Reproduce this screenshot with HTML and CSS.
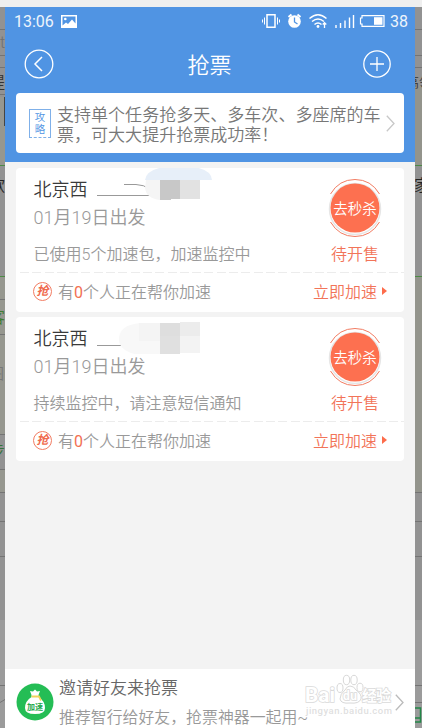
FILE: index.html
```
<!DOCTYPE html>
<html lang="zh-CN">
<head>
  <meta charset="UTF-8">
  <meta name="viewport" content="width=device-width, initial-scale=1.0">
  <title>抢票</title>
  <link rel="stylesheet" href="styles.css">
</head>
<body>

<div class="topbar"></div>

<div class="stage">
  <svg class="edge" width="5" height="721" viewBox="0 7 5 721">
    <path fill="#96978f" d="M0 97h5v68H0zM0 276h5v158H0zM0 469h5v23H0z"/>
    <path fill="#9b9b9b" d="M0 620h5v108H0z"/>
    <path stroke="#747474" d="M0 29.500h5M0 55.500h5M0 67.500h5M0 94.500h5M0 299.500h5M0 334.500h5M0 434.500h5M0 469.500h5M0 492.500h5M0 521.500h5M0 556.500h5M0 685.500h5M0 702.500l5-3"/>
    <path stroke="#4c8a45" d="M0 165.500h5M0 276.500h5"/>
    <path stroke="#444" d="M4.500 97v29"/>
    <text x="0" y="48" fill="#6f6f6f" font-size="16">t</text>
    <text x="-11" y="88" fill="#333" font-size="16">提</text>
    <text x="-11" y="191" fill="#222" font-size="16">款</text>
    <text x="-11" y="323" fill="#3f7d32" font-size="16">客</text>
    <text x="-11" y="379" fill="#777" font-size="15">图</text>
    <text x="-11" y="457" fill="#34733a" font-size="16">步</text>
  </svg>

  <main class="phone">
    <header class="header">
      <div class="status">
        <span class="time">13:06</span>
        <svg class="photo" width="16" height="13" viewBox="0 0 16 13">
          <path fill="#fff" fill-rule="evenodd" d="M0 0h16v13H0zM1.500 1.500v9l3.500-3 2 1.500 4-4.500 3.500 4v-7z"/>
          <circle cx="4.300" cy="4" r="1.300" fill="#fff"/>
        </svg>
        <svg class="signals" width="124" height="16" viewBox="0 0 124 16" fill="none" stroke="#fff">
          <path stroke-width="1.500" d="M5 1.700h8v12.600H5z"/>
          <path d="M2.500 4.500v7M.5 6.500v3M15.500 4.500v7M17.500 6.500v3"/>
          <circle cx="32.500" cy="8.500" r="6.300" fill="#fff" stroke="none"/>
          <path stroke-width="2" d="M26.500 4l3-2.500M38.500 4l-3-2.500"/>
          <path stroke="#5094e3" stroke-width="1.300" d="M32.500 4.500v4.500l3 2"/>
          <path stroke-width="1.500" d="M47.500 5.500q8.500-7.500 17 0M50 8.500q6-5 12 0M52.500 11.500q3.500-3 7 0"/>
          <circle cx="56" cy="13.500" r="1.400" fill="#fff" stroke="none"/>
          <path stroke-width="1.300" d="M62.500 15v-5M60.700 11.500l1.800-1.800 1.800 1.800"/>
          <path stroke-width="1.400" d="M74 15v-3M78.500 15v-5M83 15V7.500M87.500 15V4.500M91.500 15V2"/>
          <path stroke-width="1.200" d="M100 2.600h22v10.800h-22V11h-1.500V5h1.500z"/>
          <path fill="#fff" stroke="none" d="M112 4.200h8.500v7.600H112z"/>
        </svg>
        <span class="battery">38</span>
      </div>
      <div class="nav">
        <svg width="30" height="30" viewBox="0 0 30 30" fill="none" stroke="#fff" stroke-width="1.300">
          <circle cx="15" cy="15" r="13.800"/>
          <path stroke-width="1.500" d="M18 8l-7 7 7 7"/>
        </svg>
        <h1>抢票</h1>
        <svg width="30" height="30" viewBox="0 0 30 30" fill="none" stroke="#fff" stroke-width="1.300">
          <circle cx="15" cy="15" r="13.200"/>
          <path d="M15 8v14M8 15h14"/>
        </svg>
      </div>
      <div class="guide">
        <div class="guide-tag">攻<br>略</div>
        <p>支持单个任务抢多天、多车次、多座席的车票，可大大提升抢票成功率！</p>
        <svg width="9" height="17" viewBox="0 0 9 17" fill="none" stroke="#c8c8c8" stroke-width="1.300">
          <path d="M.8.8L8 8.500.8 16.200"/>
        </svg>
      </div>
    </header>

    <section class="list">
      <article class="ticket">
        <div class="ticket-main">
          <div class="info">
            <div class="route">
              <h2>北京西</h2>
              <svg class="mask" width="120" height="36" viewBox="0 0 120 36">
                <path fill="none" stroke="#999" d="M4 27.500h58M31 16.500h12q8 0 14 5"/>
                <path fill="#e7eff9" d="M52 12Q54-2 86-2t33 14z"/>
                <path fill="#f5f5f5" d="M53 12h14v20q-14-2-15-12z"/>
                <path fill="#c8c8c8" d="M67 12h20v19h-9v1H67z"/>
                <path fill="#e2e2e2" d="M87 12h20v19H87z"/>
              </svg>
            </div>
            <p class="date">01月19日出发</p>
            <p class="state">已使用5个加速包，加速监控中</p>
          </div>
          <div class="action">
            <div class="seckill">
              <svg width="54" height="60" viewBox="0 0 54 60" fill="none" stroke="#f27c62">
                <circle cx="27" cy="31" r="25.500" stroke="#e6e6e6" stroke-width="1.500"/>
                <path d="M2.500 16Q11 1.500 27 1.500T51.500 16M2.500 44q8.500 14.500 24.500 14.500T51.500 44"/>
                <circle cx="27" cy="30" r="24.500" fill="#fd7050" stroke="none"/>
              </svg>
              <span>去秒杀</span>
            </div>
            <p class="sale">待开售</p>
          </div>
        </div>
        <div class="ticket-foot">
          <span class="grab">抢</span>
          <p>有<b>0</b>个人正在帮你加速</p>
          <span class="boost">立即加速</span>
        </div>
      </article>

      <article class="ticket">
        <div class="ticket-main">
          <div class="info">
            <div class="route">
              <h2>北京西</h2>
              <svg class="mask" width="120" height="37" viewBox="0 0 120 37">
                <path stroke="#999" d="M4 28.500h24"/>
                <path fill="#f8f8f8" d="M67 6H47Q27 8 26 21t20 17h21z"/>
                <path fill="#f4f4f4" d="M46 6h21v18H46z"/>
                <path fill="#dedede" d="M67 6h20v13H67z"/>
                <path fill="#e0e0e0" d="M67 19h20v18H67z"/>
                <path fill="#ececec" d="M87 5h20v14H87z"/>
                <path fill="#f3f3f3" d="M87 19h20v17H87z"/>
              </svg>
            </div>
            <p class="date">01月19日出发</p>
            <p class="state">持续监控中，请注意短信通知</p>
          </div>
          <div class="action">
            <div class="seckill">
              <svg width="54" height="60" viewBox="0 0 54 60" fill="none" stroke="#f27c62">
                <circle cx="27" cy="31" r="25.500" stroke="#e6e6e6" stroke-width="1.500"/>
                <path d="M2.500 16Q11 1.500 27 1.500T51.500 16M2.500 44q8.500 14.500 24.500 14.500T51.500 44"/>
                <circle cx="27" cy="30" r="24.500" fill="#fd7050" stroke="none"/>
              </svg>
              <span>去秒杀</span>
            </div>
            <p class="sale">待开售</p>
          </div>
        </div>
        <div class="ticket-foot">
          <span class="grab">抢</span>
          <p>有<b>0</b>个人正在帮你加速</p>
          <span class="boost">立即加速</span>
        </div>
      </article>
    </section>

    <footer class="invite">
      <svg class="bag" width="38" height="38" viewBox="0 0 38 38">
        <circle cx="19" cy="19" r="18.500" fill="#24bd55"/>
        <path fill="#fff" d="M15.500 12l-1.500-4 3 .5 2-2 2 2 3-.5-1.500 4v2q6.500 4 6.500 11 0 6-10 6t-10-6q0-7 6.500-11z"/>
        <path fill="none" stroke="#f1d35c" stroke-width="1.800" d="M15.500 13.500h7.500l2 4"/>
        <text x="19" y="26.500" text-anchor="middle" font-size="8" font-weight="bold" fill="#24a94f">加速</text>
      </svg>
      <div class="invite-text">
        <h3>邀请好友来抢票</h3>
        <p>推荐智行给好友，抢票神器一起用~</p>
      </div>
      <svg class="arrow" width="9" height="17" viewBox="0 0 9 17" fill="none" stroke="#bbb" stroke-width="1.300">
        <path d="M.8.8L8 8.500.8 16.200"/>
      </svg>
      <svg class="watermark" width="92" height="46" viewBox="0 0 92 46" fill="#fff" stroke="#d8d8d8">
        <ellipse cx="36" cy="15" rx="3" ry="4.500"/>
        <ellipse cx="42.500" cy="7" rx="3.200" ry="4.700"/>
        <ellipse cx="50" cy="7" rx="3.200" ry="4.700"/>
        <ellipse cx="56" cy="14.500" rx="3" ry="4.300"/>
        <path d="M46 13q4 0 6 4 6 4 5 9-2 5-11 4-9 1-10-4 0-5 5-9 2-4 5-4z"/>
        <g class="watermark-name">
          <text x="1" y="29" font-size="21" textLength="30" lengthAdjust="spacingAndGlyphs">Bai</text>
          <text x="39" y="27" font-size="12" textLength="14">du</text>
          <text x="58" y="28" font-size="15" textLength="29">经验</text>
        </g>
        <text x="2" y="41" font-size="9.500" font-weight="500" fill="#dfdfdf" stroke="none" textLength="86">jingyan.baidu.com</text>
      </svg>
    </footer>
  </main>

  <svg class="edge" width="7" height="721" viewBox="0 7 7 721">
    <path fill="#93948c" d="M0 86h7v79H0zM0 276h7v216H0z"/>
    <path fill="#9b9b9b" d="M0 620h7v108H0z"/>
    <path stroke="#747474" d="M0 29.500h7M0 55.500h7M0 67.500h7M0 492.500h7M0 521.500h7M0 556.500h7M0 685.500h7M0 702.500h7"/>
    <path stroke="#4c8a45" d="M0 165.500h7M0 276.500h7"/>
    <text x="-9" y="87" fill="#333" font-size="13">高领</text>
    <text x="-1" y="191" fill="#222" font-size="16">家</text>
    <path fill="none" stroke="#238748" stroke-width="1.500" d="M0 708h5.500v14H0M0 718h5.500"/>
  </svg>
</div>

</body>
</html>
```
FILE: styles.css
```
* {
  box-sizing: border-box;
}
body {
  margin: 0;
  height: 728px;
  overflow: hidden;
  background: #929292;
  font-family: Roboto, "Noto Sans CJK SC", sans-serif;
  font-weight: 350;
}
h1, h2, h3, p {
  margin: 0;
  font-weight: 350;
  white-space: nowrap;
}
svg {
  display: block;
  flex-shrink: 0;
}
.topbar {
  height: 7px;
  background: #efefef;
}
.stage {
  display: flex;
  height: 721px;
}
.edge {
  background: #929292;
}
.phone {
  width: 410px;
  display: flex;
  flex-direction: column;
  background: #f3f3f3;
}

/* blue header */
.header {
  height: 155px;
  background: #5094e3;
  color: #fff;
}
.status {
  display: flex;
  align-items: center;
  height: 28px;
  padding: 0 7px 0 9px;
  font-size: 16px;
  font-weight: 400;
  color: #eef4fc;
}
.time {
  width: 47px;
}
.signals {
  margin-left: auto;
  margin-right: 4px;
}
.battery {
  width: 18px;
}
.nav {
  display: flex;
  align-items: center;
  justify-content: space-between;
  height: 58px;
  padding: 0 23px 0 19px;
}
h1 {
  padding: 0 0 2px 3px;
  font-size: 22px;
}
.guide {
  display: flex;
  align-items: center;
  height: 60px;
  margin: 0 11px;
  padding: 0 9px 0 13px;
  border-radius: 4px;
  background: #fff;
}
.guide p {
  width: 328px;
  margin-left: 6px;
  margin-right: 1px;
  margin-top: 3px;
  font-size: 17.050px;
  line-height: 20px;
  color: #777;
  white-space: normal;
}
.guide-tag {
  width: 22px;
  height: 29px;
  border: 1px solid #7fb0e9;
  border-bottom-style: dashed;
  font-size: 10.500px;
  line-height: 12px;
  padding-top: 2px;
  text-align: center;
  color: #5094e3;
}

/* ticket cards */
.list {
  flex: 1;
  padding: 6px 11px;
}
.ticket {
  height: 144px;
  margin-bottom: 5px;
  border-radius: 4px;
  background: #fff;
}
.ticket-main {
  display: flex;
  justify-content: space-between;
  height: 104px;
  padding-left: 17.500px;
  padding-right: 22px;
}
.route {
  display: flex;
  height: 37px;
}
.route h2 {
  width: 59.500px;
  padding-top: 9px;
  font-size: 18px;
  line-height: 26px;
  color: #3a3a3a;
}
.date {
  font-size: 18px;
  line-height: 26px;
  color: #999;
}
.state {
  margin-top: 12px;
  font-size: 16px;
  line-height: 24px;
  color: #999;
}
.action {
  width: 54px;
  padding-top: 10px;
}
.seckill {
  display: grid;
  place-items: center;
  height: 60px;
}
.seckill > * {
  grid-area: 1 / 1;
}
.seckill span {
  padding-bottom: 2px;
  font-size: 14.500px;
  color: #fff;
  white-space: nowrap;
}
.sale {
  margin-top: 5px;
  font-size: 16px;
  line-height: 24px;
  text-align: center;
  color: #f27459;
}
.ticket-foot {
  display: flex;
  align-items: center;
  height: 40px;
  padding: 0 17px 2px;
  background: repeating-linear-gradient(to right, #ececec 0 9px, #fff 9px 12.300px) 4px 0 / 384px 1px no-repeat;
}
.grab {
  width: 19px;
  height: 19px;
  border: 1px solid #f27c62;
  border-radius: 50%;
  font-size: 12px;
  line-height: 16px;
  font-weight: bold;
  font-style: italic;
  text-align: center;
  color: #f0694c;
}
.ticket-foot p {
  margin-left: 6px;
  font-size: 16px;
  color: #999;
}
.ticket-foot b {
  font-weight: 400;
  color: #f27052;
}
.boost {
  display: flex;
  align-items: center;
  margin-left: auto;
  font-size: 16px;
  color: #f27459;
}
.boost::after {
  content: "";
  margin-left: 5px;
  border-left: 5px solid #fd6c4b;
  border-top: 4px solid transparent;
  border-bottom: 4px solid transparent;
}

/* invite bar */
.invite {
  position: relative;
  display: flex;
  height: 59px;
  padding-left: 11px;
  background: #fff;
}
.bag {
  margin-top: 14px;
}
.invite-text {
  margin-left: 5px;
  padding-top: 6px;
}
.invite h3 {
  font-size: 17px;
  line-height: 26px;
  color: #666;
}
.invite p {
  margin-top: 4px;
  font-size: 15.900px;
  line-height: 26px;
  color: #999;
}
.arrow {
  margin: 25px 11px 0 auto;
}
.watermark {
  position: absolute;
  left: 299px;
  top: 4px;
}
.watermark-name {
  font-weight: bold;
  paint-order: stroke;
  stroke: #dadada;
  stroke-width: 1.500px;
}
```
